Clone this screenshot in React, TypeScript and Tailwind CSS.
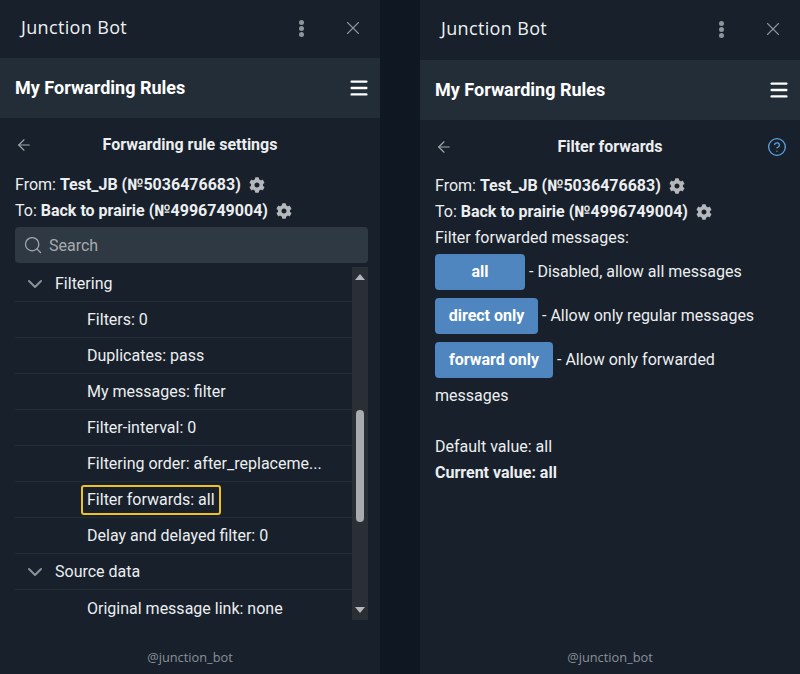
import { ArrowLeft, ChevronDown, CircleHelp, Menu, Search, X } from "lucide-react";
import { ReactNode } from "react";
import { FaCog } from "react-icons/fa";

function TitleBar({ tall }: { tall?: boolean }) {
  return (
    <div className={`flex items-center pl-[21px] pr-[16px] pb-[3px] ${tall ? "h-[60px]" : "h-[58px]"}`}>
      <span className="font-['Open_Sans'] text-[18px] text-[#eef0f2] tracking-[0.35px]">Junction Bot</span>
      <div className="ml-auto flex items-center gap-[38px]">
        <div className="flex flex-col gap-[1px] pt-[1px]">
          <div className="w-[5px] h-[5px] rounded-full bg-[#8d949b]" />
          <div className="w-[5px] h-[5px] rounded-full bg-[#8d949b]" />
          <div className="w-[5px] h-[5px] rounded-full bg-[#8d949b]" />
        </div>
        <X size={22} strokeWidth={1.2} className="text-[#8d949b]" />
      </div>
    </div>
  );
}

function Gear() {
  return <FaCog size={16} className="inline-block ml-[8px] -mt-[2px] text-[#b4b8bc]" />;
}

function RouteInfo() {
  return (
    <>
      <div className="leading-[26px]">
        From: <b className="font-bold">Test_JB (№5036476683)</b>
        <Gear />
      </div>
      <div className="leading-[26px]">
        To: <b className="font-bold">Back to prairie (№4996749004)</b>
        <Gear />
      </div>
    </>
  );
}

function Panel({ tall, title, help, children }: { tall?: boolean; title: string; help?: boolean; children: ReactNode }) {
  return (
    <div className="w-[380px] h-full flex flex-col bg-[#17202b] text-[16px] text-[#eceef0] font-['Roboto']">
      <TitleBar tall={tall} />
      <div className="h-[60px] shrink-0 flex items-center justify-between pl-[15px] pr-[10px] pb-[1px] bg-[#232d38]">
        <span className="text-[18px] font-bold text-white">My Forwarding Rules</span>
        <Menu size={22} strokeWidth={2.6} className="text-white" />
      </div>
      <div className="relative h-[54px] shrink-0 flex items-center justify-center pt-[1px] pb-[2px]">
        <ArrowLeft size={18} strokeWidth={1.5} className="absolute left-[15px] top-[18px] text-[#a3a8ad]" />
        <span className="font-bold">{title}</span>
        {help && <CircleHelp size={20} strokeWidth={1.6} className="absolute right-[13px] top-[17px] text-[#5ba3e0]" />}
      </div>
      <div className="flex-1 min-h-0 flex flex-col pl-[15px] pr-[12px]">{children}</div>
      <div className="h-[34px] shrink-0 text-center font-['Open_Sans'] text-[12.8px] leading-[34px] text-[#8b9199]">
        @junction_bot
      </div>
    </div>
  );
}

function Group({ label }: { label: string }) {
  return (
    <div className="h-[36px] flex items-center pt-[1px] border-b border-[#242e39]">
      <ChevronDown size={24} strokeWidth={2} className="ml-[8px] text-[#8b9199]" />
      <span className="ml-[8px]">{label}</span>
    </div>
  );
}

function Row({ children, marked }: { children: string; marked?: boolean }) {
  return (
    <div className="h-[36px] flex items-center pt-[1px] pl-[72px] border-b border-[#242e39] whitespace-nowrap">
      {marked ? (
        <span className="-ml-[4px] px-[4px] py-[1px] leading-[24px] rounded-[1px] outline-2 outline-[#eec222]">{children}</span>
      ) : (
        children
      )}
    </div>
  );
}

function ScrollBar() {
  return (
    <div className="w-[16px] mt-[1px] shrink-0 flex flex-col items-center bg-[#2a2f35] py-[7px]">
      <div className="w-0 h-0 border-x-[5px] border-x-transparent border-b-[6px] border-b-[#b5b7b9]" />
      <div className="flex-1 w-full flex flex-col items-center pt-[130px] pb-[85px]">
        <div className="w-[8px] flex-1 rounded-full bg-[#a9abad]" />
      </div>
      <div className="w-0 h-0 border-x-[5px] border-x-transparent border-t-[6px] border-t-[#b5b7b9]" />
    </div>
  );
}

function Option({ label, width, children }: { label: string; width: string; children: string }) {
  return (
    <>
      <button className={`inline-block h-[36px] my-[4px] mr-[4px] rounded-[4px] bg-[#4f86c0] text-center font-bold text-white align-middle -translate-y-px ${width}`}>
        {label}
      </button>
      {children}
      <br />
    </>
  );
}

export default function App() {
  return (
    <div className="w-[800px] h-[674px] flex justify-between overflow-hidden bg-[#0f1722]">
      <Panel title="Forwarding rule settings">
        <RouteInfo />
        <div className="mt-[3px] h-[36px] shrink-0 flex items-center gap-[6px] px-[8px] rounded-[4px] bg-[#2f3943] text-[#a6abb0]">
          <Search size={20} strokeWidth={1.5} />
          <span className="pt-[1px]">Search</span>
        </div>
        <div className="mt-[3px] h-[354px] flex">
          <div className="flex-1 min-w-0 overflow-hidden">
            <Group label="Filtering" />
            <Row>Filters: 0</Row>
            <Row>Duplicates: pass</Row>
            <Row>My messages: filter</Row>
            <Row>Filter-interval: 0</Row>
            <Row>Filtering order: after_replaceme...</Row>
            <Row marked>Filter forwards: all</Row>
            <Row>Delay and delayed filter: 0</Row>
            <Group label="Source data" />
            <div className="h-[36px] flex items-center pl-[72px] pt-[1px]">Original message link: none</div>
          </div>
          <ScrollBar />
        </div>
      </Panel>
      <Panel tall help title="Filter forwards">
        <div className="-mt-[1px]">
          <RouteInfo />
          <div className="leading-[26px]">Filter forwarded messages:</div>
          <div className="leading-[26px]">
            <Option label="all" width="w-[90px]">- Disabled, allow all messages</Option>
            <Option label="direct only" width="w-[103px]">- Allow only regular messages</Option>
            <Option label="forward only" width="w-[118px]">- Allow only forwarded messages</Option>
          </div>
          <div className="mt-[25px] leading-[26px]">Default value: all</div>
          <div className="leading-[26px] font-bold">Current value: all</div>
        </div>
      </Panel>
    </div>
  );
}
